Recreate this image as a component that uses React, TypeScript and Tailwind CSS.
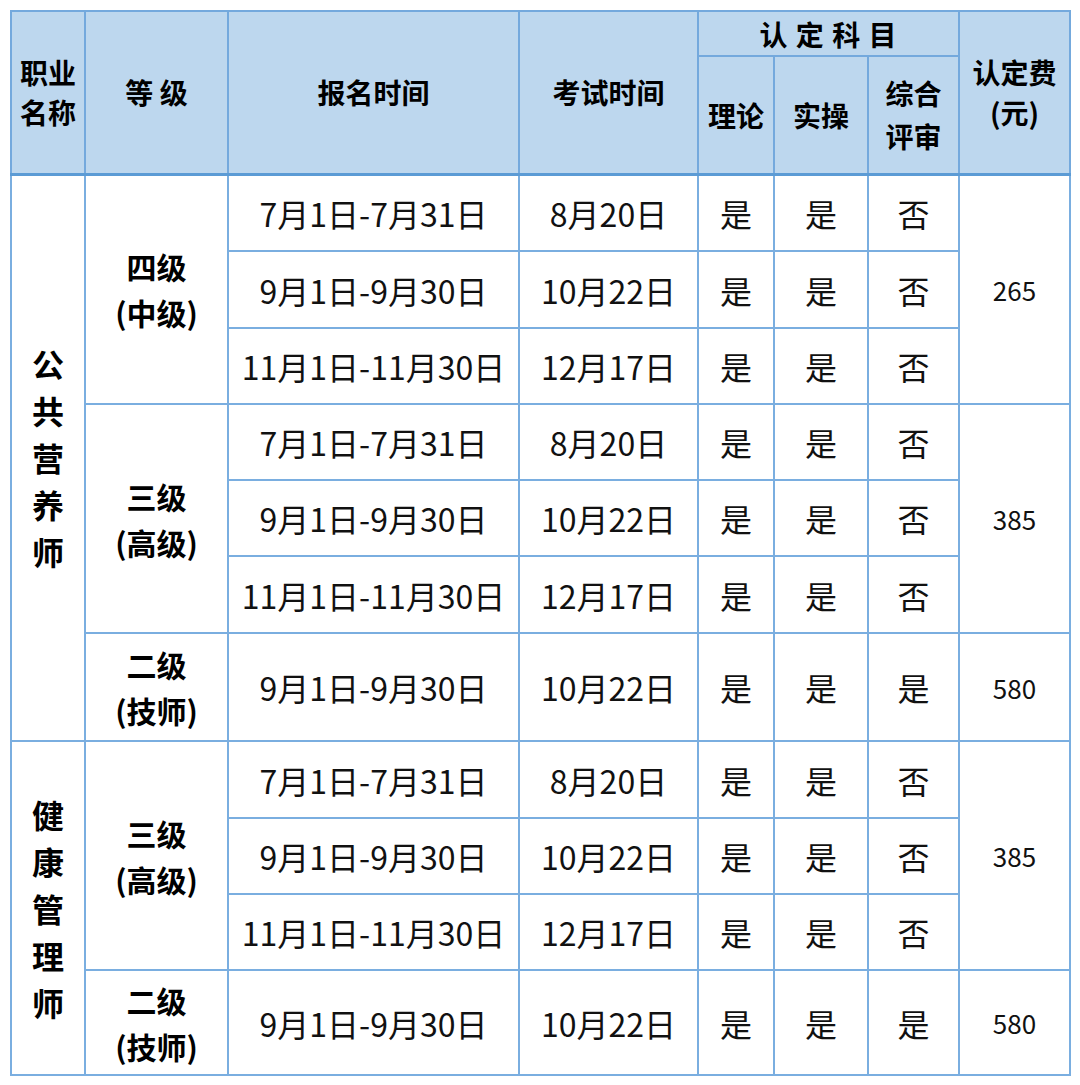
import React from "react"

const font = { fontFamily: '"Noto Sans CJK SC", "Noto Sans", sans-serif' }

type Row = { date: string; exam: string; a: string; b: string; c: string }

const g4: Row[] = [
  { date: "7月1日-7月31日", exam: "8月20日", a: "是", b: "是", c: "否" },
  { date: "9月1日-9月30日", exam: "10月22日", a: "是", b: "是", c: "否" },
  { date: "11月1日-11月30日", exam: "12月17日", a: "是", b: "是", c: "否" },
]
const g2: Row = { date: "9月1日-9月30日", exam: "10月22日", a: "是", b: "是", c: "是" }

const cell = "border-2 border-[#7aaee0] text-center align-middle p-0"
const head = "border-2 border-[#74a9dd] bg-[#bdd7ee] text-center align-middle p-0 font-bold text-[28px] leading-[40px] text-black"
const data = cell + " text-[32px] text-[#111]"
const fee = cell + " text-[26px] text-[#111]"
const level = cell + " font-bold text-[30px] leading-[46px] text-black"
const vert = cell + " font-bold text-[32px] leading-[47px] text-black"
const headB = head + " border-b-[3px] border-b-[#5b9bd5]"

function DataCells({ r }: { r: Row }) {
  return (
    <>
      <td className={data}>{r.date}</td>
      <td className={data}>{r.exam}</td>
      <td className={data}>{r.a}</td>
      <td className={data}>{r.b}</td>
      <td className={data}>{r.c}</td>
    </>
  )
}

function Vertical({ text }: { text: string }) {
  return (
    <div className="flex flex-col items-center">
      {text.split("").map((ch, i) => (
        <span key={i}>{ch}</span>
      ))}
    </div>
  )
}

function Level({ a, b }: { a: string; b: string }) {
  return (
    <div className="flex flex-col items-center">
      <span>{a}</span>
      <span>{b}</span>
    </div>
  )
}

export default function App() {
  const heights = ["h-[77px]", "h-[77px]", "h-[76px]"]
  return (
    <div className="w-[1080px] h-[1085px] bg-white pt-[10px] pl-[10px]" style={font}>
      <table className="table-fixed border-collapse w-[1059px]">
        <colgroup>
          <col className="w-[74px]" />
          <col className="w-[143px]" />
          <col className="w-[291px]" />
          <col className="w-[179px]" />
          <col className="w-[76px]" />
          <col className="w-[94px]" />
          <col className="w-[91px]" />
          <col className="w-[111px]" />
        </colgroup>
        <thead>
          <tr className="h-[45px]">
            <th rowSpan={2} className={headB}>
              <Level a="职业" b="名称" />
            </th>
            <th rowSpan={2} className={headB}>
              等 级
            </th>
            <th rowSpan={2} className={headB}>
              报名时间
            </th>
            <th rowSpan={2} className={headB}>
              考试时间
            </th>
            <th colSpan={3} className={head + " tracking-[1px]"}>
              认 定 科 目
            </th>
            <th rowSpan={2} className={headB + " leading-[37px]"}>
              <Level a="认定费" b="(元)" />
            </th>
          </tr>
          <tr className="h-[118px]">
            <th className={headB}>理论</th>
            <th className={headB}>实操</th>
            <th className={headB + " leading-[43px]"}>
              <Level a="综合" b="评审" />
            </th>
          </tr>
        </thead>
        <tbody>
          {g4.map((r, i) => (
            <tr key={"a" + i} className={heights[i]}>
              {i === 0 && (
                <td rowSpan={7} className={vert}>
                  <Vertical text="公共营养师" />
                </td>
              )}
              {i === 0 && (
                <td rowSpan={3} className={level}>
                  <Level a="四级" b="(中级)" />
                </td>
              )}
              <DataCells r={r} />
              {i === 0 && (
                <td rowSpan={3} className={fee}>
                  265
                </td>
              )}
            </tr>
          ))}
          {g4.map((r, i) => (
            <tr key={"b" + i} className={i === 2 ? "h-[77px]" : "h-[76px]"}>
              {i === 0 && (
                <td rowSpan={3} className={level}>
                  <Level a="三级" b="(高级)" />
                </td>
              )}
              <DataCells r={r} />
              {i === 0 && (
                <td rowSpan={3} className={fee}>
                  385
                </td>
              )}
            </tr>
          ))}
          <tr className="h-[108px]">
            <td className={level}>
              <Level a="二级" b="(技师)" />
            </td>
            <DataCells r={g2} />
            <td className={fee}>580</td>
          </tr>
          {g4.map((r, i) => (
            <tr key={"c" + i} className={i === 0 ? "h-[77px]" : "h-[76px]"}>
              {i === 0 && (
                <td rowSpan={4} className={vert}>
                  <Vertical text="健康管理师" />
                </td>
              )}
              {i === 0 && (
                <td rowSpan={3} className={level}>
                  <Level a="三级" b="(高级)" />
                </td>
              )}
              <DataCells r={r} />
              {i === 0 && (
                <td rowSpan={3} className={fee}>
                  385
                </td>
              )}
            </tr>
          ))}
          <tr className="h-[105px]">
            <td className={level}>
              <Level a="二级" b="(技师)" />
            </td>
            <DataCells r={g2} />
            <td className={fee}>580</td>
          </tr>
        </tbody>
      </table>
    </div>
  )
}
